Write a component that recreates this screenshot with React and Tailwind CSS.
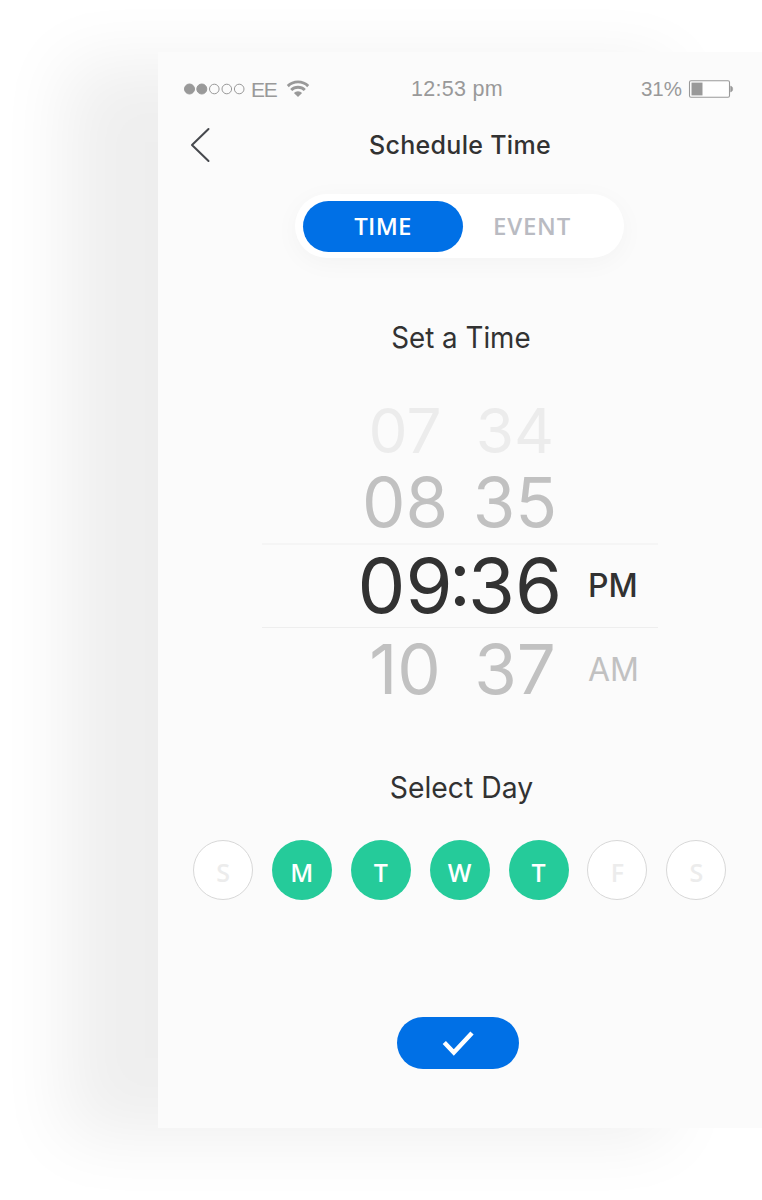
const rows = [
  { h: "07", m: "34", row: "h-[72px] text-[#ececec]", text: "text-[62px]" },
  { h: "08", m: "35", row: "h-[70px] text-[#c1c1c1]", text: "text-[69px]" },
];

const days = [
  ["S", false],
  ["M", true],
  ["T", true],
  ["W", true],
  ["T", true],
  ["F", false],
  ["S", false],
];

function Wifi() {
  return (
    <svg className="ml-[9px] h-[18px] w-[24px]" viewBox="0 0 24 18" fill="none" stroke="#999" strokeWidth="2.9">
      <path d="M1.8 6.100a14.500 14.500 0 0 1 20.400 0" />
      <path d="M5.200 10a9.600 9.600 0 0 1 13.600 0" />
      <path d="M12 17l-4.100-4a5.800 5.800 0 0 1 8.200 0z" fill="#999" stroke="none" />
    </svg>
  );
}

function Battery() {
  return (
    <svg className="ml-[6px] h-[18px] w-[46px]" viewBox="0 0 46 18">
      <rect x="1.5" y="0.8" width="40" height="16.4" rx="1.5" fill="#fefefe" stroke="#999" strokeWidth="1.1" />
      <rect x="3.5" y="2.6" width="11" height="12.8" fill="#999" />
      <path d="M42.600 6c2.800.6 2.800 5.400 0 6z" fill="#999" stroke="#999" strokeWidth="0.5" />
    </svg>
  );
}

function StatusBar() {
  return (
    <div className="grid h-[24px] grid-cols-3 items-center pl-[26px] pr-[28px] font-['Liberation_Sans',sans-serif] text-[20.5px] leading-none text-[#999]">
      <div className="flex items-center">
        <svg className="h-[12px] w-[62px]" viewBox="0 0 62 12" fill="none" stroke="#999" strokeWidth="1">
          <circle cx="5.5" cy="6" r="5" fill="#999" />
          <circle cx="17.8" cy="6" r="5" fill="#999" />
          <circle cx="30.3" cy="6" r="4.8" />
          <circle cx="42.8" cy="6" r="4.8" />
          <circle cx="55.2" cy="6" r="4.8" />
        </svg>
        <span className="ml-[5px] text-[21px] tracking-[-1.2px]">EE</span>
        <Wifi />
      </div>
      <div className="pr-[4px] pt-[2px] text-center text-[21.5px] tracking-[0.3px]">12:53 pm</div>
      <div className="flex items-center justify-end">
        <span>31%</span>
        <Battery />
      </div>
    </div>
  );
}

function TimeRow({ h, m, row, text, sep, suffix }) {
  return (
    <div className={`flex items-center pl-[192px] leading-none ${row}`}>
      <span className={`w-[110px] text-center ${text}`}>{h}</span>
      <span className="mb-[14px] flex w-0 justify-center text-[76px]">{sep}</span>
      <span className={`w-[110px] text-center ${text}`}>{m}</span>
      {suffix}
    </div>
  );
}

export default function App() {
  return (
    <div className="h-[1200px] w-[762px] overflow-hidden bg-white pl-[158px] pt-[52px] font-[Inter,sans-serif] text-[#323232]">
      <main className="flex h-[1076px] w-[604px] flex-col bg-[#fbfbfb] shadow-[-93px_10px_66px_0px_rgba(0,0,0,0.067)]">
        <div className="pt-[25px]">
          <StatusBar />
        </div>
        <header className="mt-[24px] flex h-[40px] items-center">
          <svg className="ml-[32px] h-[36px] w-[21px]" viewBox="0 0 21 36" fill="none" stroke="#46484d" strokeWidth="2" strokeLinecap="round" strokeLinejoin="round">
            <path d="M18.5 2L2 18l16.500 16" />
          </svg>
          <h1 className="ml-[58px] w-[382px] text-center text-[25px] font-medium leading-none tracking-[0.3px]">Schedule Time</h1>
        </header>

        <div className="ml-[137px] mt-[29px] flex h-[64px] w-[329px] items-center rounded-full bg-white pl-[8px] font-['Open_Sans',sans-serif] text-[24px] font-semibold leading-none shadow-[0_5px_26px_rgba(0,0,0,0.035)]">
          <div className="flex h-[51px] w-[160px] items-center justify-center rounded-full bg-[#0070e6] tracking-[0.3px] text-white">TIME</div>
          <div className="w-[138px] text-center tracking-[0.8px] text-[#b9bbc2]">EVENT</div>
        </div>

        <h2 className="mt-[64px] h-[30px] scale-x-94 pl-[2px] text-center text-[29.5px] leading-[30px]">Set a Time</h2>

        <section className="mt-[43px]">
          {rows.map((r) => (
            <TimeRow key={r.h} {...r} />
          ))}
          <div className="mx-auto mt-[6px] h-[85px] w-[396px] border-b border-t-2 border-b-[#eeeeee] border-t-[#f5f5f5]">
            <div className="-ml-[104px]">
              <TimeRow
                h="09"
                m="36"
                sep=":"
                row="h-[80px]"
                text="text-[76px]"
                suffix={<span className="ml-[18px] mt-[2px] text-[32px] font-medium">PM</span>}
              />
            </div>
          </div>
          <TimeRow
            h="10"
            m="37"
            row="h-[82px] text-[#c1c1c1]"
            text="text-[69px]"
            suffix={<span className="ml-[18px] mt-[2px] text-[32px]">AM</span>}
          />
        </section>

        <h2 className="mt-[62px] h-[30px] scale-x-96 pl-[3px] text-center text-[29.5px] leading-[30px]">Select Day</h2>

        <div className="mt-[38px] flex gap-[18.9px] pl-[35px] font-['Open_Sans',sans-serif] text-[25px] font-semibold leading-none">
          {days.map(([d, on], i) => (
            <div
              key={i}
              className={`flex h-[60px] w-[60px] items-center justify-center rounded-full pt-[4px] ${
                on ? "bg-[#25cb9a] text-white" : "border border-[#d8d8d8] bg-white text-[#ececec]"
              }`}
            >
              {d}
            </div>
          ))}
        </div>

        <button className="ml-[239px] mt-[117px] flex h-[52px] w-[122px] items-center justify-center rounded-full bg-[#0070e6]">
          <svg className="h-[28px] w-[34px]" viewBox="0 0 34 28" fill="none" stroke="#fff" strokeWidth="4.5">
            <path d="M3.300 13.500L12.800 23.500L31 4" />
          </svg>
        </button>
      </main>
    </div>
  );
}
